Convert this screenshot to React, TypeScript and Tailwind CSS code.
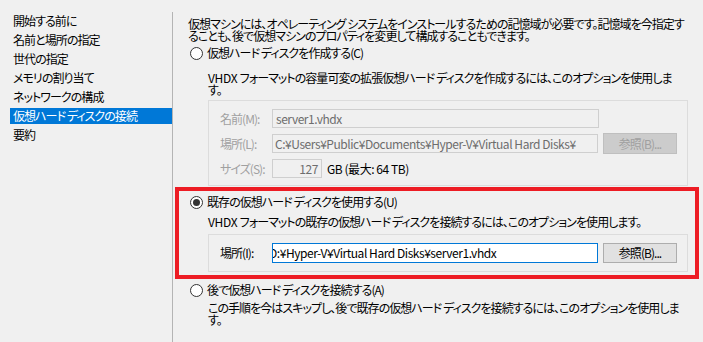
const steps = [
  "開始する前に",
  "名前と場所の指定",
  "世代の指定",
  "メモリの割り当て",
  "ネットワークの構成",
  "仮想ハード ディスクの接続",
  "要約",
];

function Radio({ checked, label }: { checked?: boolean; label: string }) {
  return (
    <div className="flex h-[14px] items-center gap-[4px] pl-[2px]">
      <span className="flex h-[13px] w-[13px] shrink-0 items-center justify-center rounded-full border border-[#333333] bg-white">
        {checked && <span className="h-[7px] w-[7px] rounded-full bg-[#333333]" />}
      </span>
      <span className="leading-[14px]">{label}</span>
    </div>
  );
}

function Button({ disabled }: { disabled?: boolean }) {
  return (
    <div
      className={
        disabled
          ? "flex h-full w-[74px] items-center justify-center border border-[#bfbfbf] bg-[#cccccc] text-[#a0a0a0]"
          : "flex h-full w-[74px] items-center justify-center border border-[#adadad] bg-[#e1e1e1]"
      }
    >
      参照(B)...
    </div>
  );
}

export default function App() {
  return (
    <div className="flex h-[342px] w-[703px] overflow-hidden bg-[#f0f0f0] font-['Noto_Sans_CJK_JP','Noto_Sans',sans-serif] text-[12px] tracking-[-0.95px] text-black [font-feature-settings:'palt']">
      {/* steps */}
      <div className="w-[172px] shrink-0 pt-[11px]">
        {steps.map((s, i) => (
          <div key={s} className="flex h-[19px] items-center pl-[10px]">
            <div
              className={
                i === 5
                  ? "h-[16px] w-full bg-[#0078d7] pl-[3px] leading-[16px] text-white"
                  : "h-[16px] w-full pl-[3px] leading-[16px]"
              }
            >
              {s}
            </div>
          </div>
        ))}
      </div>

      {/* page */}
      <div className="mt-[12px] flex-1 border-l border-[#b4b4b4] pl-[15px] pt-[6px]">
        <div className="whitespace-nowrap leading-[12px]">
          <div>仮想マシンには、オペレーティング システムをインストールするための記憶域が必要です。記憶域を今指定す</div>
          <div>ることも、後で仮想マシンのプロパティを変更して構成することもできます。</div>
        </div>

        <div className="mt-[4px]">
          <Radio label="仮想ハード ディスクを作成する(C)" />
        </div>
        <div className="ml-[20px] mt-[12px] whitespace-nowrap leading-[12px]">
          <div>
            <span className="tracking-[-0.3px]">VHDX </span>フォーマットの容量可変の拡張仮想ハード ディスクを作成するには、このオプションを使用しま
          </div>
          <div>す。</div>
        </div>

        <div className="ml-[20px] mt-[4px] w-[480px] border border-[#dcdcdc] pb-[7px] pl-[11px] pr-[10px] pt-[8px]">
          <div className="flex h-[19px] items-center">
            <div className="w-[52px] shrink-0 text-[#a0a0a0]">名前(M):</div>
            <div className="flex h-full w-[327px] items-center border border-[#cfcfcf] pl-[3px] tracking-[-0.45px] text-[#6d6d6d]">
              server1.vhdx
            </div>
          </div>
          <div className="mt-[5px] flex h-[21px] items-center">
            <div className="w-[52px] shrink-0 text-[#a0a0a0]">場所(L):</div>
            <div className="flex h-[19px] w-[327px] items-center overflow-hidden whitespace-nowrap border border-[#cfcfcf] pl-[2px] tracking-[-0.45px] text-[#6d6d6d]">
              C:¥Users¥Public¥Documents¥Hyper-V¥Virtual Hard Disks¥
            </div>
            <div className="ml-[5px] h-full">
              <Button disabled />
            </div>
          </div>
          <div className="mt-[5px] flex h-[19px] items-center">
            <div className="w-[52px] shrink-0 text-[#a0a0a0]">サイズ(S):</div>
            <div className="flex h-full w-[50px] items-center justify-end border border-[#cfcfcf] pr-[3px] tracking-[-0.45px] text-[#6d6d6d]">
              127
            </div>
            <div className="ml-[5px] tracking-[-0.45px]">GB (最大: 64 TB)</div>
          </div>
        </div>

        {/* highlighted option */}
        <div className="-ml-[13px] mt-[1px] w-[524px] border-4 border-[#ed1c24] pb-[3px] pl-[9px] pt-[4px]">
          <Radio checked label="既存の仮想ハード ディスクを使用する(U)" />
          <div className="ml-[20px] mt-[7px] whitespace-nowrap leading-[12px]">
            <span className="tracking-[-0.3px]">VHDX </span>フォーマットの既存の仮想ハード ディスクを接続するには、このオプションを使用します。
          </div>
          <div className="ml-[20px] mt-[6px] w-[480px] border border-[#dcdcdc] pb-[8px] pl-[11px] pr-[10px] pt-[8px]">
            <div className="flex h-[20px] items-center">
              <div className="w-[52px] shrink-0">場所(I):</div>
              <div className="flex h-full w-[327px] items-center overflow-hidden whitespace-nowrap border border-[#0078d7] bg-white tracking-[-0.45px]">
                <span className="-ml-[4px]">D:¥Hyper-V¥Virtual Hard Disks¥server1.vhdx</span>
              </div>
              <div className="ml-[5px] h-full">
                <Button />
              </div>
            </div>
          </div>
        </div>

        <div className="mt-[4px]">
          <Radio label="後で仮想ハード ディスクを接続する(A)" />
        </div>
        <div className="ml-[20px] mt-[5px] whitespace-nowrap leading-[12px]">
          <div>この手順を今はスキップし、後で既存の仮想ハード ディスクを接続するには、このオプションを使用しま</div>
          <div>す。</div>
        </div>
      </div>
    </div>
  );
}
